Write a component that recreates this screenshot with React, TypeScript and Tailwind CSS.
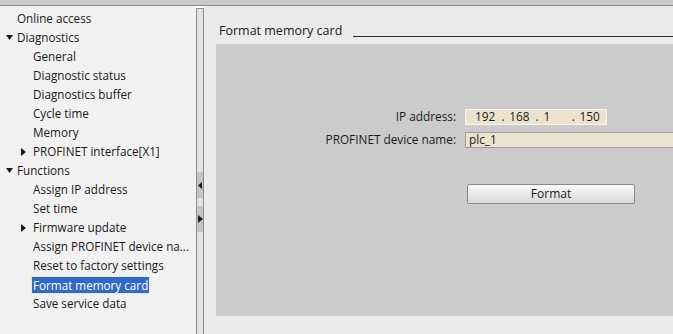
import React from 'react';

type Node = { label: string; level: 0 | 1; arrow?: 'down' | 'right'; selected?: boolean };

const TREE: Node[] = [
  { label: 'Online access', level: 0 },
  { label: 'Diagnostics', level: 0, arrow: 'down' },
  { label: 'General', level: 1 },
  { label: 'Diagnostic status', level: 1 },
  { label: 'Diagnostics buffer', level: 1 },
  { label: 'Cycle time', level: 1 },
  { label: 'Memory', level: 1 },
  { label: 'PROFINET interface[X1]', level: 1, arrow: 'right' },
  { label: 'Functions', level: 0, arrow: 'down' },
  { label: 'Assign IP address', level: 1 },
  { label: 'Set time', level: 1 },
  { label: 'Firmware update', level: 1, arrow: 'right' },
  { label: 'Assign PROFINET device na...', level: 1 },
  { label: 'Reset to factory settings', level: 1 },
  { label: 'Format memory card', level: 1, selected: true },
  { label: 'Save service data', level: 1 },
];

const IP = ['192', '168', '1', '150'];

const Arrow = ({ dir }: { dir: 'down' | 'right' | 'left' }) => {
  if (dir === 'down')
    return (
      <svg width="7" height="5" viewBox="0 0 7 5"><path d="M0 0h7L3.5 5z" fill="#1a1a1a" /></svg>
    );
  if (dir === 'right')
    return (
      <svg width="5" height="8" viewBox="0 0 5 8"><path d="M0 0l5 4-5 4z" fill="#1a1a1a" /></svg>
    );
  return (
    <svg width="4" height="7" viewBox="0 0 4 7"><path d="M4 0v7L0 3.5z" fill="#1a1a1a" /></svg>
  );
};

export default function App() {
  return (
    <div className="w-[673px] h-[334px] flex flex-col overflow-hidden text-[#1a1a1a]" style={{ fontFamily: '"Open Sans", "DejaVu Sans", sans-serif' }}>
      {/* top strip */}
      <div className="h-[6px] shrink-0 bg-[#c9c9c9] border-b border-[#8a8a8a]" />
      <div className="flex flex-1 min-h-0">
        {/* Tree */}
        <div className="w-[196px] shrink-0 bg-[#f1f1f1] pt-[3px] text-[11.7px]">
          {TREE.map((n) => (
            <div key={n.label} className="h-[19px] flex items-center whitespace-nowrap">
              <div className={n.level === 0 ? 'w-[17px] flex justify-center pl-[1px]' : 'w-[33px] flex justify-end pr-[7px]'}>
                {n.arrow && <Arrow dir={n.arrow} />}
              </div>
              {n.selected ? (
                <span className="bg-[#3169c6] text-white px-[1px] -ml-[1px] leading-[16px] outline outline-1 outline-dotted outline-[#e8e0a0]">{n.label}</span>
              ) : (
                <span>{n.label}</span>
              )}
            </div>
          ))}
        </div>
        {/* Splitter */}
        <div className="w-[8px] shrink-0 mt-[2px] bg-[#e4e4e4] border-x border-t border-[#8c8c8c] flex flex-col">
          <div className="h-[163px]" />
          <div className="h-[26px] bg-[#c4c4c4] flex items-center justify-center"><Arrow dir="left" /></div>
          <div className="h-[8px]" />
          <div className="h-[26px] bg-[#c4c4c4] flex items-center justify-center"><Arrow dir="right" /></div>
        </div>
        {/* Content */}
        <div className="flex-1 bg-[#ebebeb] pl-[12px] flex flex-col">
          <div className="h-[38px] flex items-end pb-[4px]">
            <span className="text-[12.5px] ml-[3px] leading-[18px]">Format memory card</span>
            <div className="flex-1 ml-[11px] mb-[3px] border-b border-[#2a2a2a]" />
          </div>
          <div className="h-[272px] bg-[#cbcbcb] pt-[65px] text-[11.8px]">
            <div className="flex items-center h-[16px]">
              <div className="w-[241px] text-right pr-[1px]">IP address:</div>
              <div className="ml-[8px] w-[142px] h-[16px] bg-[#ede2cd] border border-[#f8f4ea] flex items-center pl-[9px] leading-none">
                {IP.map((o, i) => (
                  <React.Fragment key={i}>
                    {i > 0 && <span className="w-[8px]">.</span>}
                    <span className={i === 2 ? 'w-[29px]' : 'w-[27px]'}>{o}</span>
                  </React.Fragment>
                ))}
              </div>
            </div>
            <div className="flex items-center h-[16px] mt-[7px]">
              <div className="w-[241px] text-right pr-[1px]">PROFINET device name:</div>
              <div className="ml-[8px] flex-1 h-[16px] bg-[#ede2cd] border border-[#9a9a9a] border-r-0 flex items-center pl-[3px] leading-none">plc_1</div>
            </div>
            <div className="mt-[36px] pl-[251px]">
              <button className="w-[168px] h-[20px] border border-[#8a8a8a] rounded-[2px] bg-gradient-to-b from-[#fafafa] to-[#d8d8d8] text-[12px] leading-none">Format</button>
            </div>
          </div>
        </div>
      </div>
    </div>
  );
}
